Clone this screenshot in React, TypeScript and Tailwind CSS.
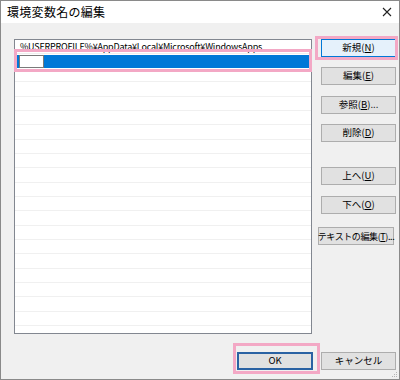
import React from "react";

const font = { fontFamily: '"Noto Sans CJK JP", "Noto Sans", sans-serif' };

function Btn({ label, k = "", suffix = "", variant = "normal", extra = "", text = "text-[9.5px]" }: { label: string; k?: string; suffix?: string; variant?: "normal" | "hover" | "default"; extra?: string; text?: string }) {
  const cls =
    variant === "hover"
      ? "border border-[#0078d7] bg-[#e5f1fb]"
      : variant === "default"
      ? "border-2 border-[#2a62a3] bg-[#e1e1e1]"
      : "border border-[#adadad] bg-[#e1e1e1]";
  return (
    <div className={`h-[18px] flex items-center justify-center leading-none text-black whitespace-nowrap ${text} ${cls} ${extra}`}>
      <span>
        {label}
        {k ? (
          <>
            (<span className="underline">{k}</span>)
          </>
        ) : null}
        {suffix}
      </span>
    </div>
  );
}

export default function App() {
  const rows = Array.from({ length: 19 });
  return (
    <div className="relative w-[400px] h-[380px] flex flex-col border border-[#8a8a8a] bg-[#f0f0f0]" style={font}>
      {/* Title bar */}
      <div className="h-[22px] bg-white flex items-center justify-between pl-[6px] pr-[6px]">
        <span className="text-[12px] tracking-[0.3px] text-black leading-none">環境変数名の編集</span>
        <svg width="10" height="10" viewBox="0 0 10 10" className="mr-[1px]">
          <path d="M1 1 L9 9 M9 1 L1 9" stroke="#222" strokeWidth="1.1" />
        </svg>
      </div>

      {/* Body */}
      <div className="flex-1 flex flex-col pl-[13px] pr-[3px] pt-[16px] pb-[9px]">
        <div className="h-[295px] flex">
          {/* List */}
          <div className="w-[298px] h-full border border-[#828790] bg-white flex flex-col overflow-hidden">
            <div className="h-[14px] shrink-0 flex items-center pl-[5px] text-[9px] tracking-[-0.2px] leading-none text-black whitespace-nowrap border-b border-[#f0f0f0]">
              %USERPROFILE%¥AppData¥Local¥Microsoft¥WindowsApps
            </div>
            <div className="h-[14px] shrink-0 flex items-center px-[1px]">
              <div className="h-[13px] w-full bg-[#0078d7] flex items-center pl-[3px]">
                <div className="h-[13px] w-[25px] bg-white border border-[#7a7a7a]" />
              </div>
            </div>
            {rows.map((_, i) => (
              <div key={i} className={`${i % 3 === 1 ? "h-[15px]" : "h-[14px]"} shrink-0 border-b border-[#f0f0f0]`} />
            ))}
          </div>

          {/* Buttons */}
          <div className="ml-[9px] w-[75px] flex flex-col">
            <Btn label="新規" k="N" variant="hover" />
            <Btn label="編集" k="E" extra="mt-[10px]" />
            <Btn label="参照" k="B" suffix="..." extra="mt-[11px]" />
            <Btn label="削除" k="D" extra="mt-[10px]" />
            <Btn label="上へ" k="U" extra="mt-[25px]" />
            <Btn label="下へ" k="O" extra="mt-[11px]" />
            <Btn label="テキストの編集" k="T" suffix="..." extra="mt-[13px] -ml-[3px] w-[76px] tracking-[-0.4px]" text="text-[9px]" />
          </div>
        </div>

        {/* Bottom buttons */}
        <div className="mt-[18px] flex justify-end">
          <div className="w-[76px]">
            <Btn label="OK" variant="default" />
          </div>
          <div className="w-[75px] ml-[8px]">
            <Btn label="キャンセル" />
          </div>
        </div>
      </div>

      {/* resize grip */}
      <svg width="6" height="6" viewBox="0 0 6 6" className="absolute right-[1px] bottom-[1px]">
        <rect x="4" y="0" width="1" height="1" fill="#b5b5b5" />
        <rect x="2" y="2" width="1" height="1" fill="#b5b5b5" />
        <rect x="4" y="2" width="1" height="1" fill="#b5b5b5" />
        <rect x="0" y="4" width="1" height="1" fill="#b5b5b5" />
        <rect x="2" y="4" width="1" height="1" fill="#b5b5b5" />
        <rect x="4" y="4" width="1" height="1" fill="#b5b5b5" />
      </svg>

      {/* pink annotation boxes */}
      <div className="absolute left-[13px] top-[48px] w-[298px] h-[23px] border-[3px] border-[#f3a8c5]" />
      <div className="absolute left-[314px] top-[35px] w-[83px] h-[24px] border-[3px] border-[#f3a8c5]" />
      <div className="absolute left-[232px] top-[342px] w-[87px] h-[31px] border-[3px] border-[#f3a8c5]" />
    </div>
  );
}
